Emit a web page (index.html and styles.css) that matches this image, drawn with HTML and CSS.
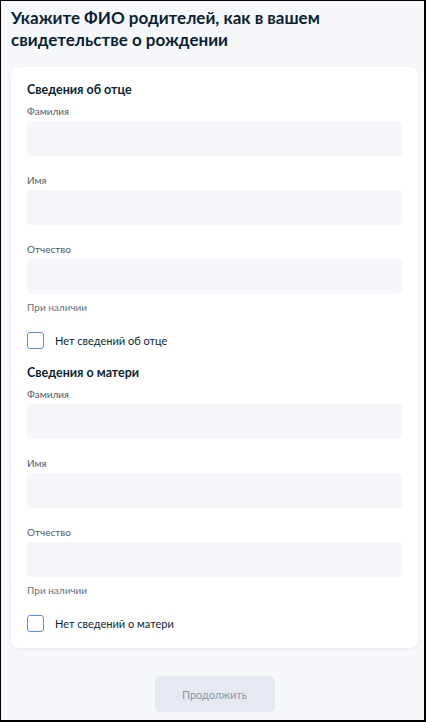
FILE: index.html
```html
<!DOCTYPE html>
<html lang="ru">
<head>
    <meta charset="UTF-8">
    <meta name="viewport" content="width=device-width, initial-scale=1.0">
    <title>ФИО родителей</title>
    <link rel="stylesheet" href="styles.css">
</head>
<body>
    <div class="page">
        <h1 class="page-title">Укажите ФИО родителей, как в вашем свидетельстве о рождении</h1>

        <form class="card">
            <h2 class="section-title">Сведения об отце</h2>
            <div class="field">
                <label class="field-label">Фамилия</label>
                <input class="field-input" type="text">
            </div>
            <div class="field">
                <label class="field-label">Имя</label>
                <input class="field-input" type="text">
            </div>
            <div class="field">
                <label class="field-label">Отчество</label>
                <input class="field-input" type="text">
                <div class="field-hint">При наличии</div>
            </div>
            <label class="check-row">
                <span class="check-box"></span>
                <span class="check-text">Нет сведений об отце</span>
            </label>

            <h2 class="section-title">Сведения о матери</h2>
            <div class="field">
                <label class="field-label">Фамилия</label>
                <input class="field-input" type="text">
            </div>
            <div class="field">
                <label class="field-label">Имя</label>
                <input class="field-input" type="text">
            </div>
            <div class="field">
                <label class="field-label">Отчество</label>
                <input class="field-input" type="text">
                <div class="field-hint">При наличии</div>
            </div>
            <label class="check-row">
                <span class="check-box"></span>
                <span class="check-text">Нет сведений о матери</span>
            </label>
        </form>

        <div class="actions">
            <button class="btn-next" type="button" disabled>Продолжить</button>
        </div>
    </div>
</body>
</html>
```

FILE: styles.css
```css
/* Basic styling */
* {
    margin: 0;
    padding: 0;
    box-sizing: border-box;
    font-family: Lato, "Noto Sans", Arial, sans-serif;
}

html, body {
    width: 426px;
    height: 722px;
    overflow: hidden;
}

body {
    background-color: #f6f8fb;
    color: #0b1f33;
    border-style: solid;
    border-color: #000;
    border-width: 1px 2px 2px 1px;
}

.page {
    padding: 6px 6px 0 10px;
}

.page-title {
    font-size: 17px;
    line-height: 22px;
    font-weight: 700;
    color: #0b1f33;
    padding-right: 60px;
    margin-bottom: 16px;
}

.card {
    background-color: #fff;
    border-radius: 8px;
    box-shadow: 0 1px 4px rgba(11, 31, 51, 0.06);
    padding: 15px 16px 16px 16px;
    display: flex;
    flex-direction: column;
}

.section-title {
    font-size: 12.5px;
    line-height: 16px;
    font-weight: 700;
    color: #0b1f33;
    margin-bottom: 6px;
}

.field {
    display: flex;
    flex-direction: column;
    margin-bottom: 17px;
}

.field:has(.field-hint) {
    margin-bottom: 0;
}

.field-label {
    font-size: 10px;
    line-height: 14px;
    color: #4e5a66;
    margin-bottom: 3px;
}

.field-input {
    height: 35px;
    border: none;
    border-radius: 4px;
    background-color: #f5f6fa;
}

.field-hint {
    font-size: 10px;
    line-height: 14px;
    color: #66727f;
    margin-top: 6px;
}

.check-row {
    display: flex;
    align-items: center;
    gap: 11px;
    margin-top: 18px;
    margin-bottom: 16px;
}

.card .check-row:last-child {
    margin-bottom: 0;
}

.check-box {
    width: 17px;
    height: 17px;
    border: 1.5px solid #5b8bef;
    border-radius: 3px;
    flex-shrink: 0;
}

.check-text {
    font-size: 11px;
    line-height: 16px;
    color: #0b1f33;
}

.actions {
    display: flex;
    justify-content: center;
    margin-top: 28px;
}

.btn-next {
    width: 120px;
    height: 36px;
    border: none;
    border-radius: 5px;
    background-color: #e4e9f2;
    color: #8c97a6;
    font-size: 11px;
}
```
